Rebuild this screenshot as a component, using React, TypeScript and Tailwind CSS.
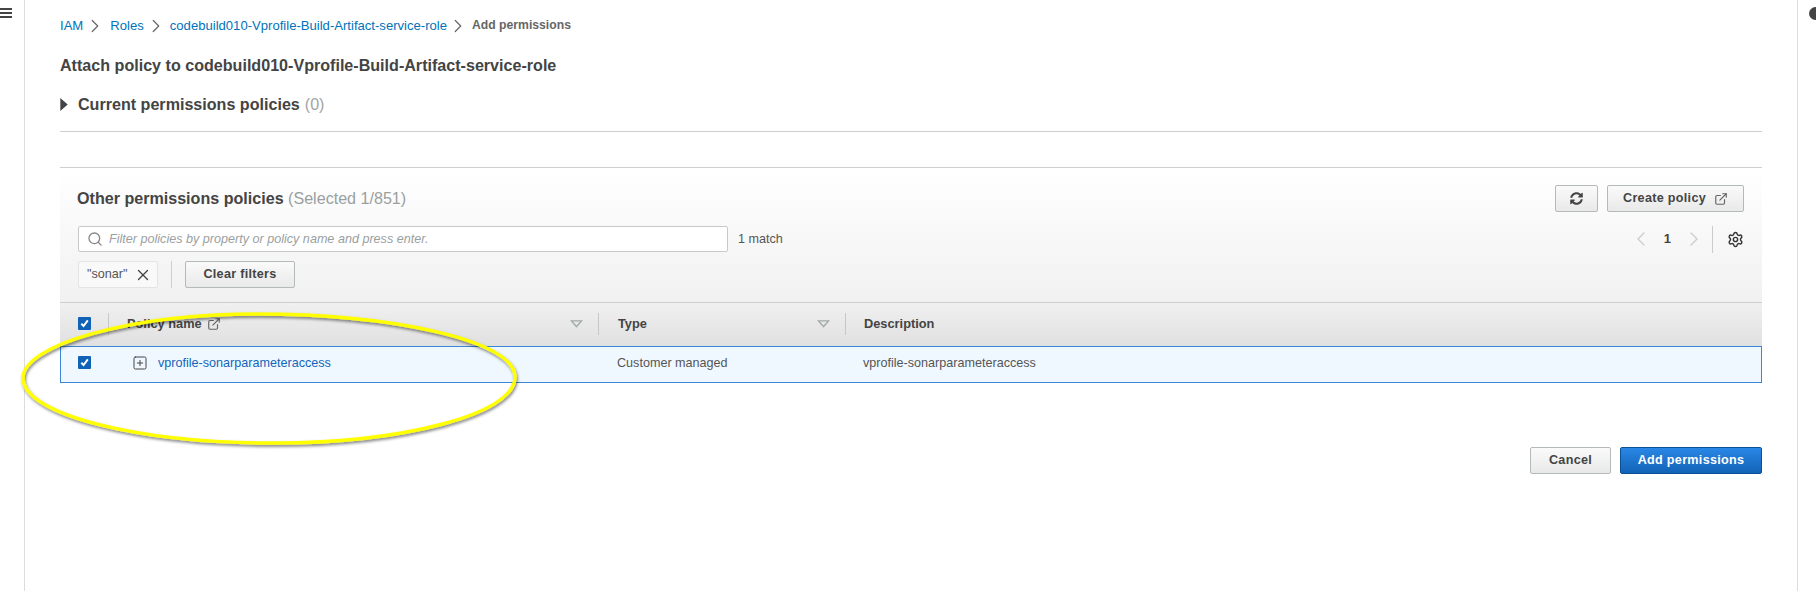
import { ChevronLeft, ChevronRight, ExternalLink, Search, Settings, SquarePlus, X } from 'lucide-react';
import { FaSyncAlt } from 'react-icons/fa';

const Checkbox: React.FC = () => {
  return (
    <span className="flex h-[13px] w-[13px] items-center justify-center rounded-[1px] bg-[#0f62b5]">
      <svg viewBox="0 0 12 12" className="h-[11px] w-[11px]" fill="none" stroke="white" strokeWidth="2.2">
        <path d="M2.5 6.2 5 8.8 9.6 2.6" />
      </svg>
    </span>
  );
};

const FilterArrow: React.FC = () => {
  return (
    <svg viewBox="0 0 14 9" className="h-[8px] w-[13px]" fill="none" stroke="#a3a9a9" strokeWidth="1.6">
      <path d="M1.4 1h11.2L7 7.6z" />
    </svg>
  );
};

const Sep: React.FC = () => <span className="h-[22px] w-px bg-[#c4c8c8]" />;

const greyButton =
  'flex h-[27px] items-center justify-center rounded-[2px] border border-[#b4b9b9] bg-linear-to-b from-[#fafafa] to-[#e9e9e9] text-[12.6px] leading-[27px] font-bold tracking-[0.3px] text-[#444]';

export default function App() {
  return (
    <div className="relative flex h-screen overflow-hidden bg-white font-['Liberation_Sans',sans-serif] text-[#444]">
      <aside className="w-[25px] shrink-0 border-r border-[#dcdcdc] pt-[8px]">
        <div className="flex w-[12px] flex-col gap-[2px]">
          <span className="h-[2px] bg-[#444]" />
          <span className="h-[2px] bg-[#444]" />
          <span className="h-[2px] bg-[#444]" />
        </div>
      </aside>

      <main className="min-w-0 flex-1 px-[35px] pt-[16px]">
        <nav className="flex h-[19px] items-center text-[13.1px] text-[#0073bb]">
          <span>IAM</span>
          <ChevronRight size={22} strokeWidth={1.3} className="mx-[1px] text-[#666]" />
          <span className="ml-[3px]">Roles</span>
          <ChevronRight size={22} strokeWidth={1.3} className="mx-[1px] text-[#666]" />
          <span className="ml-[2px]">codebuild010-Vprofile-Build-Artifact-service-role</span>
          <ChevronRight size={22} strokeWidth={1.3} className="text-[#666]" />
          <span className="ml-[3px] text-[12.2px] font-bold text-[#666]">Add permissions</span>
        </nav>

        <h1 className="mt-[20px] h-[20px] text-[16.1px] leading-[20px] font-bold">
          Attach policy to codebuild010-Vprofile-Build-Artifact-service-role
        </h1>

        <div className="mt-[19px] flex h-[20px] items-center">
          <svg viewBox="0 0 8 14" className="h-[13px] w-[8px]" fill="#444">
            <path d="M0 0 8 7 0 14z" />
          </svg>
          <span className="ml-[10px] text-[16.1px] font-bold">Current permissions policies</span>
          <span className="ml-[5px] text-[16.1px] text-[#a0a5a5]">(0)</span>
        </div>

        <hr className="mt-[17px] border-[#cfcfcf]" />

        <section className="mt-[35px] border-t border-[#cfcfcf]">
          <div className="bg-linear-to-b from-white to-[#f1f1f1] px-[18px] pt-[17px] pb-[14px]">
            <div className="flex h-[27px] items-center justify-between">
              <h2 className="-ml-[1px] text-[16.1px] font-bold">
                Other permissions policies <span className="font-normal text-[#9a9f9f]">(Selected 1/851)</span>
              </h2>
              <div className="flex gap-[9px]">
                <button className={`${greyButton} w-[43px]`}>
                  <FaSyncAlt size={13} />
                </button>
                <button className={`${greyButton} w-[137px] gap-[8px]`}>
                  Create policy
                  <ExternalLink size={14} className="text-[#666]" />
                </button>
              </div>
            </div>

            <div className="mt-[14px] flex h-[26px] items-center">
              <div className="flex h-[26px] w-[650px] items-center rounded-[2px] border border-[#c6caca] bg-white pl-[8px]">
                <Search size={16} strokeWidth={2} className="text-[#888]" />
                <span className="ml-[6px] text-[12.6px] text-[#9a9f9f] italic">
                  Filter policies by property or policy name and press enter.
                </span>
              </div>
              <span className="ml-[10px] text-[12.6px] text-[#555]">1 match</span>
              <div className="ml-auto flex items-center">
                <ChevronLeft size={24} strokeWidth={1.3} className="text-[#c8cccc]" />
                <span className="mx-[11px] text-[13px] font-bold">1</span>
                <ChevronRight size={24} strokeWidth={1.3} className="text-[#c8cccc]" />
                <span className="ml-[6px] h-[27px] w-px bg-[#c8cccc]" />
                <Settings size={17} strokeWidth={2} className="ml-[14px] text-[#333]" />
              </div>
            </div>

            <div className="mt-[9px] flex h-[27px] items-center">
              <span className="flex h-[27px] w-[80px] items-center justify-between rounded-[2px] border border-[#e4e4e4] bg-[#f9f9f9] pr-[5px] pl-[8px] text-[12.6px] text-[#555]">
                "sonar"
                <X size={18} strokeWidth={1.8} className="text-[#444]" />
              </span>
              <span className="ml-[13px] h-[27px] w-px bg-[#d0d0d0]" />
              <button className={`${greyButton} ml-[13px] w-[110px]`}>Clear filters</button>
            </div>
          </div>

          <div className="grid h-[44px] grid-cols-[49px_490px_247px_1fr] items-center border-t border-[#cfcfcf] bg-linear-to-b from-[#f0f0f0] to-[#e0e0e0] text-[12.8px] font-bold">
            <div className="-mt-[2px] flex items-center justify-between pl-[18px]">
              <Checkbox />
              <Sep />
            </div>
            <div className="-mt-[2px] flex items-center justify-between pl-[18px]">
              <span className="flex items-center gap-[5px]">
                Policy name
                <ExternalLink size={14} className="text-[#666]" />
              </span>
              <span className="flex items-center gap-[15px]">
                <FilterArrow />
                <Sep />
              </span>
            </div>
            <div className="-mt-[2px] flex items-center justify-between pl-[19px]">
              Type
              <span className="flex items-center gap-[15px]">
                <FilterArrow />
                <Sep />
              </span>
            </div>
            <div className="-mt-[2px] pl-[18px]">Description</div>
          </div>

          <div className="grid h-[37px] grid-cols-[49px_490px_247px_1fr] items-center border border-[#3b86d8] bg-[#f0f8ff] text-[12.6px] text-[#555]">
            <div className="-mt-[4px] pl-[17px]">
              <Checkbox />
            </div>
            <div className="-mt-[2px] flex items-center pl-[22px]">
              <SquarePlus size={16} strokeWidth={1.5} className="text-[#444]" />
              <span className="ml-[10px] text-[#1166bb]">vprofile-sonarparameteraccess</span>
            </div>
            <div className="-mt-[2px] pl-[17px]">Customer managed</div>
            <div className="-mt-[2px] pl-[16px]">vprofile-sonarparameteraccess</div>
          </div>
        </section>

        <div className="mt-[64px] flex justify-end gap-[9px]">
          <button className={`${greyButton} w-[81px]`}>Cancel</button>
          <button className="flex h-[27px] w-[142px] items-center justify-center rounded-[2px] border border-[#0b4f94] bg-linear-to-b from-[#2a87e6] to-[#1163b6] text-[12.6px] leading-[27px] font-bold tracking-[0.3px] text-white">
            Add permissions
          </button>
        </div>
      </main>

      <aside className="w-[19px] shrink-0 border-l border-[#dcdcdc] pt-[7px] pl-[11px]">
        <span className="block h-[13px] w-[13px] rounded-full bg-[#444]" />
      </aside>

      {/* yellow highlight someone drew on the screenshot */}
      <svg className="pointer-events-none absolute top-[300px] left-[10px] h-[160px] w-[520px]" viewBox="0 0 520 160" fill="none">
        <defs>
          <filter id="ringShadow" x="-5%" y="-15%" width="110%" height="130%">
            <feDropShadow dx="1" dy="2" stdDeviation="1.5" floodColor="#000" floodOpacity="0.5" />
          </filter>
        </defs>
        <path
          d="M13 78C13 45 120 14 247 14 380 14 505 40 505 77 505 115 390 143 263 143 130 143 13 115 13 78Z"
          stroke="#ffff00"
          strokeWidth="3.4"
          filter="url(#ringShadow)"
        />
      </svg>
    </div>
  );
}
